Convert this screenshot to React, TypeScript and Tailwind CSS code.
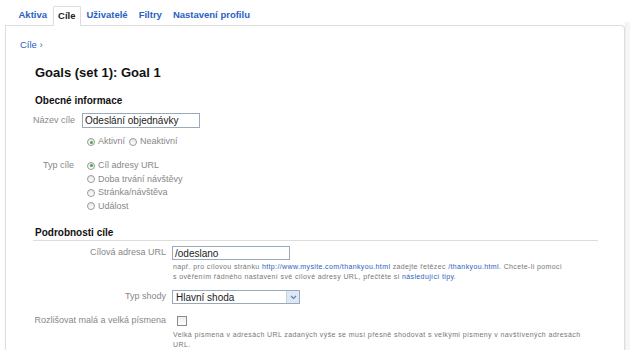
import React from 'react';

const tabs = ['Aktiva', 'Cíle', 'Uživatelé', 'Filtry', 'Nastavení profilu'];

function Radio({ checked = false }: { checked?: boolean }) {
  return (
    <span className="flex h-[8px] w-[8px] shrink-0 items-center justify-center rounded-full border border-[#9a9a9a] bg-gradient-to-b from-[#e8e8e8] to-white">
      {checked && <span className="h-[3px] w-[3px] rounded-full bg-[#3fae3f]" />}
    </span>
  );
}

function RadioOption({ label, checked }: { label: string; checked?: boolean }) {
  return (
    <div className="flex h-[13.5px] items-center gap-[3px]">
      <Radio checked={checked} />
      <span className="whitespace-nowrap text-[9px] text-[#888]">{label}</span>
    </div>
  );
}

export default function App() {
  return (
    <div className="relative flex h-[350px] w-[630px] overflow-hidden bg-white font-['Liberation_Sans',Arial,sans-serif]">
      <div className="flex w-[625px] flex-col">
        {/* tabs */}
        <div className="flex h-[25px] shrink-0 items-end pl-[13px]">
          {tabs.map((t) =>
            t === 'Cíle' ? (
              <div
                key={t}
                className="relative z-10 -mb-px flex h-[20px] items-center rounded-t-[2px] border border-b-0 border-[#ddd] bg-white px-[4.5px] text-[9.5px] font-bold text-[#222]"
              >
                {t}
              </div>
            ) : (
              <div key={t} className="flex h-[20px] items-center px-[5.5px] text-[9.5px] font-bold text-[#2a61c2]">
                {t}
              </div>
            )
          )}
        </div>

        {/* panel */}
        <div className="ml-[5px] flex-1 rounded-tr-[4px] border border-b-0 border-[#ddd] pl-[14px]">
          <div className="mt-[13px] h-[12px] text-[9.5px] leading-[12px] text-[#2a61c2]">Cíle ›</div>

          <div className="ml-[13px]">
            <div className="mt-[14px] h-[16px] pl-[2px] text-[13px] font-bold leading-[16px] text-[#111]">
              Goals (set 1): Goal 1
            </div>

            <div className="mt-[14px] h-[12px] pl-[2px] text-[10px] font-bold leading-[12px] text-[#111]">
              Obecné informace
            </div>

            <div className="mt-[6px] flex items-center gap-[8px]">
              <div className="w-[41px] whitespace-nowrap text-right text-[9px] text-[#888]">Název cíle</div>
              <div className="flex h-[15px] w-[118px] items-center border border-[#9ab] pl-[2px] text-[10px] text-[#222]">
                Odeslání objednávky
              </div>
            </div>

            <div className="mt-[8px] flex h-[12px] items-center gap-[4px] pl-[54px]">
              <div className="flex items-center gap-[3px]">
                <Radio checked />
                <span className="text-[9px] text-[#888]">Aktivní</span>
              </div>
              <div className="flex items-center gap-[3px]">
                <Radio />
                <span className="text-[9px] text-[#888]">Neaktivní</span>
              </div>
            </div>

            <div className="mt-[11px] flex">
              <div className="flex h-[13.5px] w-[41px] items-center justify-end whitespace-nowrap text-[9px] text-[#888]">
                Typ cíle
              </div>
              <div className="ml-[13px] flex flex-col">
                <RadioOption label="Cíl adresy URL" checked />
                <RadioOption label="Doba trvání návštěvy" />
                <RadioOption label="Stránka/návštěva" />
                <RadioOption label="Událost" />
              </div>
            </div>

            <div className="mt-[14px] h-[14px] w-[565px] border-b border-[#ddd] pl-[2px] text-[10px] font-bold leading-[12px] text-[#111]">
              Podrobnosti cíle
            </div>

            <div className="mt-[5px] flex gap-[6px] pl-[2px]">
              <div className="flex h-[14px] w-[131px] items-center justify-end text-[9px] text-[#888]">
                Cílová adresa URL
              </div>
              <div className="flex flex-col">
                <div className="flex h-[14px] w-[118px] items-center border border-[#9ab] pl-[2px] text-[10px] text-[#222]">
                  /odeslano
                </div>
                <div className="mt-[2px] pl-[1px] text-[7px] leading-[10px] tracking-[0.38px] text-[#777]">
                  <div className="whitespace-nowrap">
                    např. pro cílovou stránku <span className="text-[#2a61c2]">http://www.mysite.com/thankyou.html</span> zadejte
                    řetězec <span className="text-[#2a61c2]">/thankyou.html</span>. Chcete-li pomoci
                  </div>
                  <div className="whitespace-nowrap">
                    s ověřením řádného nastavení své cílové adresy URL, přečtěte si{' '}
                    <span className="text-[#2a61c2]">následující tipy</span>.
                  </div>
                </div>
              </div>
            </div>

            <div className="mt-[8px] flex gap-[6px] pl-[2px]">
              <div className="flex h-[14px] w-[131px] items-center justify-end text-[9px] text-[#888]">Typ shody</div>
              <div className="flex h-[14px] w-[128px] items-center border border-[#9ab]">
                <span className="flex-1 pl-[3px] text-[10px] text-[#222]">Hlavní shoda</span>
                <span className="flex h-full w-[13px] items-center justify-center border-l border-[#c5d3e6] bg-[#dde7f5]">
                  <svg width="7" height="5" viewBox="0 0 7 5">
                    <path d="M1 1 L3.5 3.5 L6 1" fill="none" stroke="#6a7fa0" strokeWidth="1.2" />
                  </svg>
                </span>
              </div>
            </div>

            <div className="mt-[12px] flex gap-[6px] pl-[2px]">
              <div className="flex h-[10px] w-[131px] items-center justify-end whitespace-nowrap text-[9px] text-[#888]">
                Rozlišovat malá a velká písmena
              </div>
              <div className="flex flex-col">
                <span className="ml-[5px] h-[10px] w-[10px] border border-[#8a8a8a] bg-gradient-to-b from-[#eee] to-white" />
                <div className="mt-[4px] pl-[1px] text-[7px] leading-[10px] tracking-[0.4px] text-[#777]">
                  <div className="whitespace-nowrap">
                    Velká písmena v adresách URL zadaných výše se musí přesně shodovat s velkými písmeny v navštívených adresách
                  </div>
                  <div>URL.</div>
                </div>
              </div>
            </div>
          </div>
        </div>
      </div>
      <div className="mt-[22px] w-[5px] border-l border-[#eee] bg-[#f6f6f6]" />
    </div>
  );
}
